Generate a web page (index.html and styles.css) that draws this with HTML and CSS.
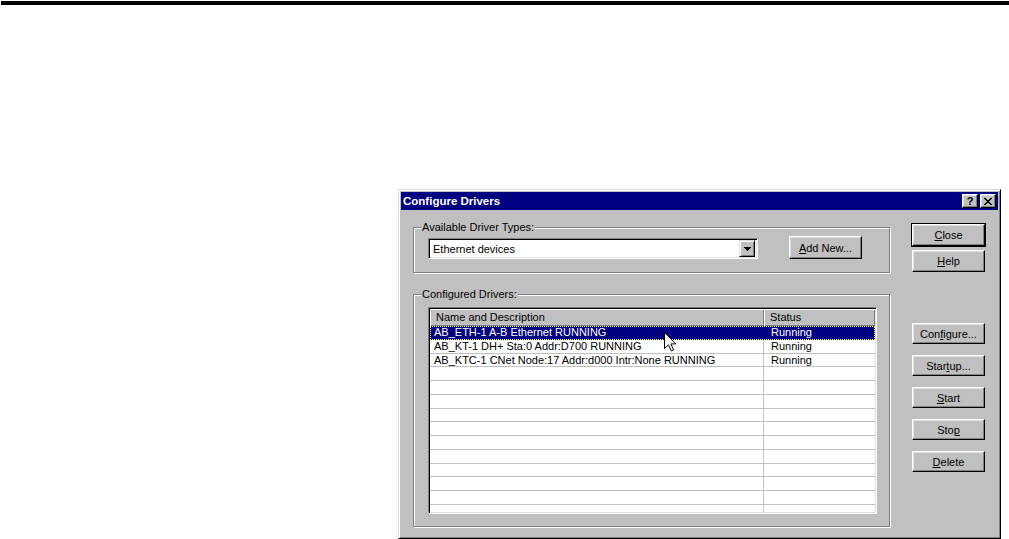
FILE: index.html
```html
<!DOCTYPE html>
<html>
<head>
<meta charset="utf-8">
<link rel="stylesheet" href="styles.css">
</head>
<body>
<div class="topbar"></div>
<div class="dialog">
  <div class="titlebar">
    <span class="title">Configure Drivers</span>
    <div class="tbtns">
      <span class="tbtn q">?</span>
      <span class="tbtn x"><svg width="8" height="7" viewBox="0 0 8 7"><path d="M0 0h2v1h-2zM6 0h2v1h-2zM1 1h2v1h-2zM5 1h2v1h-2zM2 2h4v1h-4zM3 3h2v1h-2zM2 4h4v1h-4zM1 5h2v1h-2zM5 5h2v1h-2zM0 6h2v1h-2zM6 6h2v1h-2z" fill="#000"/></svg></span>
    </div>
  </div>
  <div class="body">
    <div class="leftcol">
      <div class="group g1">
        <span class="legend">Available Driver Types:</span>
        <div class="combo">
          <span class="combo-text">Ethernet devices</span>
          <span class="combo-btn"><svg width="7" height="4" viewBox="0 0 7 4"><path d="M0 0h7v1h-7zM1 1h5v1h-5zM2 2h3v1h-3zM3 3h1v1h-1z" fill="#000"/></svg></span>
        </div>
        <button class="btn addnew"><u>A</u>dd New...</button>
      </div>
      <div class="group g2">
        <span class="legend">Configured Drivers:</span>
        <div class="list">
          <div class="lhead">
            <div class="hc c1">Name and Description</div>
            <div class="hc c2">Status</div>
          </div>
          <div class="lrows">
            <div class="row sel"><div class="cell c1">AB_ETH-1 A-B Ethernet RUNNING</div><div class="cell c2">Running</div></div>
            <div class="row"><div class="cell c1">AB_KT-1 DH+ Sta:0 Addr:D700 RUNNING</div><div class="cell c2">Running</div></div>
            <div class="row"><div class="cell c1">AB_KTC-1 CNet Node:17 Addr:d000 Intr:None RUNNING</div><div class="cell c2">Running</div></div>
            <div class="row"><div class="cell c1"></div><div class="cell c2"></div></div>
            <div class="row"><div class="cell c1"></div><div class="cell c2"></div></div>
            <div class="row"><div class="cell c1"></div><div class="cell c2"></div></div>
            <div class="row"><div class="cell c1"></div><div class="cell c2"></div></div>
            <div class="row"><div class="cell c1"></div><div class="cell c2"></div></div>
            <div class="row"><div class="cell c1"></div><div class="cell c2"></div></div>
            <div class="row"><div class="cell c1"></div><div class="cell c2"></div></div>
            <div class="row"><div class="cell c1"></div><div class="cell c2"></div></div>
            <div class="row"><div class="cell c1"></div><div class="cell c2"></div></div>
            <div class="row"><div class="cell c1"></div><div class="cell c2"></div></div>
            <div class="row"><div class="cell c1"></div><div class="cell c2"></div></div>
            <div class="row"><div class="cell c1"></div><div class="cell c2"></div></div>
          </div>
        </div>
      </div>
    </div>
    <div class="rightcol">
      <button class="btn rb close"><u>C</u>lose</button>
      <button class="btn rb help"><u>H</u>elp</button>
      <button class="btn rb small configure">Con<u>f</u>igure...</button>
      <button class="btn rb small next">Star<u>t</u>up...</button>
      <button class="btn rb small next"><u>S</u>tart</button>
      <button class="btn rb small next">Sto<u>p</u></button>
      <button class="btn rb small next"><u>D</u>elete</button>
    </div>
  </div>
  <svg class="cursor" width="13" height="20" viewBox="0 0 13 20"><path d="M0.5 0.5 L0.5 16.5 L4.5 12.8 L7.3 19 L9.6 18 L6.9 11.9 L11.8 11.9 Z" fill="#fff" stroke="#000" stroke-width="1" stroke-linejoin="miter"/></svg>
</div>
</body>
</html>
```
FILE: styles.css
```css
html, body {
  margin: 0;
  background: #fff;
}
body {
  font-family: "Liberation Sans", Arial, sans-serif;
  font-size: 11px;
  color: #000;
}
.topbar {
  height: 4px;
  margin: 1px 0 0 1px;
  background: #000;
}
.dialog {
  position: relative;
  margin: 184px 0 0 398px;
  width: 603px;
  height: 350px;
  box-sizing: border-box;
  background: #c0c0c0;
  border: 1px solid;
  border-color: #dfdfdf #000 #000 #dfdfdf;
  box-shadow: inset 1px 1px 0 #fff, inset -1px -1px 0 #808080;
  padding: 2px 2px 0 2px;
}
.titlebar {
  height: 18px;
  background: #000080;
  display: flex;
  align-items: center;
  justify-content: space-between;
  padding: 0 2px 0 2px;
}
.title {
  color: #fff;
  font-weight: bold;
  font-size: 11.5px;
}
.tbtns {
  display: flex;
  gap: 2px;
}
.tbtn {
  width: 16px;
  height: 14px;
  box-sizing: border-box;
  background: #c0c0c0;
  border: 1px solid;
  border-color: #fff #000 #000 #fff;
  box-shadow: inset -1px -1px 0 #808080, inset 1px 1px 0 #dfdfdf;
  display: flex;
  align-items: center;
  justify-content: center;
  font-weight: bold;
  font-size: 11px;
  line-height: 12px;
}
.body {
  display: flex;
  padding-left: 12px;
}
.leftcol {
  width: 477px;
}
.group {
  position: relative;
  box-sizing: border-box;
  border: 1px solid #808080;
  box-shadow: 1px 1px 0 #fff, inset 1px 1px 0 #fff;
}
.legend {
  position: absolute;
  left: 7px;
  top: -7px;
  padding: 0 1px;
  line-height: 13px;
  background: #c0c0c0;
}
.g1 {
  margin-top: 17px;
  height: 46px;
  display: flex;
  align-items: flex-end;
  padding: 0 0 13px 14px;
}
.combo {
  width: 330px;
  height: 21px;
  box-sizing: border-box;
  background: #fff;
  border: 1px solid;
  border-color: #808080 #fff #fff #808080;
  box-shadow: inset 1px 1px 0 #000, inset -1px -1px 0 #dfdfdf;
  display: flex;
  align-items: center;
  justify-content: space-between;
  padding: 2px;
}
.combo-text {
  padding-left: 2px;
}
.combo-btn {
  width: 16px;
  height: 17px;
  box-sizing: border-box;
  background: #c0c0c0;
  border: 1px solid;
  border-color: #dfdfdf #000 #000 #dfdfdf;
  box-shadow: inset 1px 1px 0 #fff, inset -1px -1px 0 #808080;
  display: flex;
  align-items: center;
  justify-content: center;
}
.btn {
  font-family: "Liberation Sans", Arial, sans-serif;
  font-size: 11px;
  color: #000;
  background: #c0c0c0;
  border: 1px solid;
  border-color: #fff #000 #000 #fff;
  box-shadow: inset -1px -1px 0 #808080, inset 1px 1px 0 #dfdfdf;
  padding: 0;
  margin: 0;
  box-sizing: border-box;
  text-align: center;
}
.addnew {
  margin-left: 31px;
  width: 73px;
  height: 23px;
}
.g2 {
  margin-top: 21px;
  height: 233px;
  padding: 12px 0 0 14px;
}
.list {
  width: 449px;
  height: 207px;
  box-sizing: border-box;
  background: #fff;
  border: 1px solid;
  border-color: #808080 #fff #fff #808080;
  box-shadow: inset 1px 1px 0 #000, inset -1px -1px 0 #dfdfdf;
  padding: 1px;
  display: flex;
  flex-direction: column;
}
.lhead {
  display: flex;
  height: 17px;
  flex: none;
}
.hc {
  box-sizing: border-box;
  background: #c0c0c0;
  box-shadow: inset 1px 1px 0 #fff, inset -1px -1px 0 #808080;
  line-height: 17px;
  padding-left: 6px;
  white-space: nowrap;
}
.hc.c1 {
  width: 334px;
}
.hc.c2 {
  flex: 1;
}
.lrows {
  flex: 1;
  min-height: 0;
  overflow: hidden;
}
.row {
  position: relative;
  display: flex;
  height: 13.75px;
  box-sizing: border-box;
  border-bottom: 1px solid #c0c0c0;
}
.cell {
  line-height: 13px;
  white-space: nowrap;
}
.cell.c1 {
  width: 334px;
  box-sizing: border-box;
  border-right: 1px solid #c0c0c0;
  padding-left: 4px;
}
.cell.c2 {
  flex: 1;
  padding-left: 7px;
}
.row.sel {
  background: #000080;
  color: #fff;
  border-bottom-color: #000080;
}
.row.sel .cell.c1 {
  border-right-color: #000080;
}
.row.sel::after {
  content: "";
  position: absolute;
  left: 0;
  right: 0;
  top: 0;
  bottom: -1px;
  border: 1px dotted #ffff60;
}
.rightcol {
  margin-left: 22px;
  width: 73px;
  display: flex;
  flex-direction: column;
}
.rb {
  width: 73px;
}
.close {
  margin-top: 14px;
  height: 22px;
  outline: 1px solid #000;
}
.help {
  margin-top: 4px;
  height: 22px;
}
.small {
  height: 21px;
}
.configure {
  margin-top: 51px;
}
.next {
  margin-top: 11px;
}
.cursor {
  position: absolute;
  left: 265px;
  top: 142px;
}
```
